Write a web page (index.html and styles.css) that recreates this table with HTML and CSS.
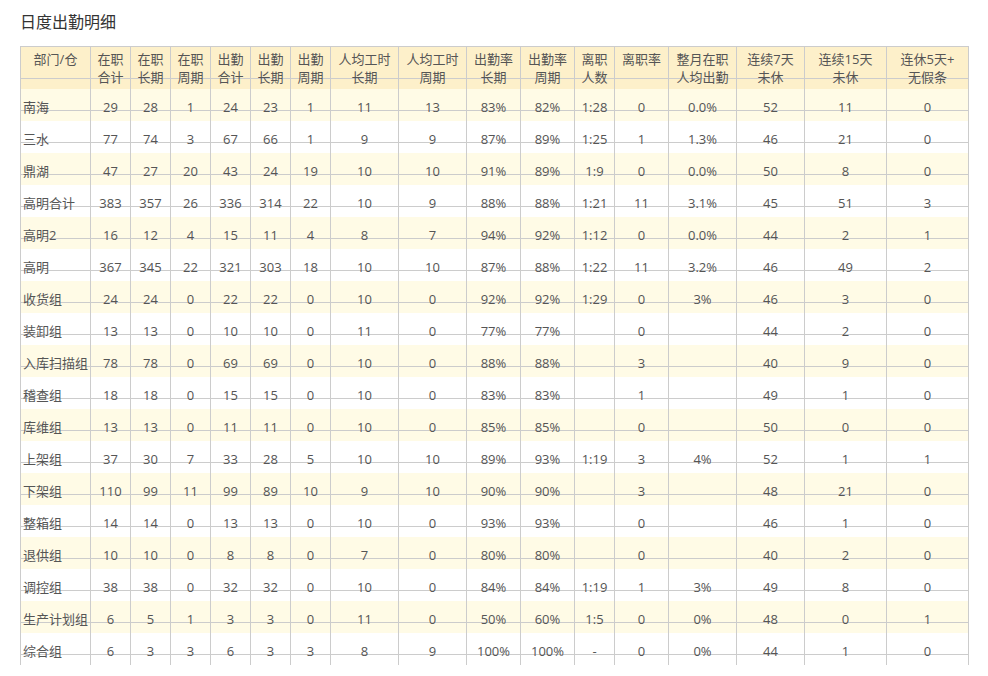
FILE: index.html
```html
<!DOCTYPE html>
<html lang="zh-CN">
<head>
<meta charset="utf-8">
<title>日度出勤明细</title>
<link rel="stylesheet" href="styles.css">
</head>
<body>
<div class="page">
  <h1 class="title">日度出勤明细</h1>
  <table class="grid">
    <colgroup>
      <col class="w70"><col class="w40"><col class="w40"><col class="w40"><col class="w40"><col class="w40"><col class="w40">
      <col class="w68"><col class="w68"><col class="w54"><col class="w54"><col class="w40"><col class="w54">
      <col class="w68"><col class="w68"><col class="w82"><col class="w83">
    </colgroup>
    <thead>
      <tr>
        <th>部门/仓</th><th>在职<br>合计</th><th>在职<br>长期</th><th>在职<br>周期</th><th>出勤<br>合计</th><th>出勤<br>长期</th><th>出勤<br>周期</th>
        <th>人均工时<br>长期</th><th>人均工时<br>周期</th><th>出勤率<br>长期</th><th>出勤率<br>周期</th><th>离职<br>人数</th><th>离职率</th>
        <th>整月在职<br>人均出勤</th><th>连续7天<br>未休</th><th>连续15天<br>未休</th><th>连休5天+<br>无假条</th>
      </tr>
    </thead>
    <tbody>
      <tr><td>南海</td><td>29</td><td>28</td><td>1</td><td>24</td><td>23</td><td>1</td><td>11</td><td>13</td><td>83%</td><td>82%</td><td>1:28</td><td>0</td><td>0.0%</td><td>52</td><td>11</td><td>0</td></tr>
      <tr><td>三水</td><td>77</td><td>74</td><td>3</td><td>67</td><td>66</td><td>1</td><td>9</td><td>9</td><td>87%</td><td>89%</td><td>1:25</td><td>1</td><td>1.3%</td><td>46</td><td>21</td><td>0</td></tr>
      <tr><td>鼎湖</td><td>47</td><td>27</td><td>20</td><td>43</td><td>24</td><td>19</td><td>10</td><td>10</td><td>91%</td><td>89%</td><td>1:9</td><td>0</td><td>0.0%</td><td>50</td><td>8</td><td>0</td></tr>
      <tr><td>高明合计</td><td>383</td><td>357</td><td>26</td><td>336</td><td>314</td><td>22</td><td>10</td><td>9</td><td>88%</td><td>88%</td><td>1:21</td><td>11</td><td>3.1%</td><td>45</td><td>51</td><td>3</td></tr>
      <tr><td>高明2</td><td>16</td><td>12</td><td>4</td><td>15</td><td>11</td><td>4</td><td>8</td><td>7</td><td>94%</td><td>92%</td><td>1:12</td><td>0</td><td>0.0%</td><td>44</td><td>2</td><td>1</td></tr>
      <tr><td>高明</td><td>367</td><td>345</td><td>22</td><td>321</td><td>303</td><td>18</td><td>10</td><td>10</td><td>87%</td><td>88%</td><td>1:22</td><td>11</td><td>3.2%</td><td>46</td><td>49</td><td>2</td></tr>
      <tr><td>收货组</td><td>24</td><td>24</td><td>0</td><td>22</td><td>22</td><td>0</td><td>10</td><td>0</td><td>92%</td><td>92%</td><td>1:29</td><td>0</td><td>3%</td><td>46</td><td>3</td><td>0</td></tr>
      <tr><td>装卸组</td><td>13</td><td>13</td><td>0</td><td>10</td><td>10</td><td>0</td><td>11</td><td>0</td><td>77%</td><td>77%</td><td></td><td>0</td><td></td><td>44</td><td>2</td><td>0</td></tr>
      <tr><td>入库扫描组</td><td>78</td><td>78</td><td>0</td><td>69</td><td>69</td><td>0</td><td>10</td><td>0</td><td>88%</td><td>88%</td><td></td><td>3</td><td></td><td>40</td><td>9</td><td>0</td></tr>
      <tr><td>稽查组</td><td>18</td><td>18</td><td>0</td><td>15</td><td>15</td><td>0</td><td>10</td><td>0</td><td>83%</td><td>83%</td><td></td><td>1</td><td></td><td>49</td><td>1</td><td>0</td></tr>
      <tr><td>库维组</td><td>13</td><td>13</td><td>0</td><td>11</td><td>11</td><td>0</td><td>10</td><td>0</td><td>85%</td><td>85%</td><td></td><td>0</td><td></td><td>50</td><td>0</td><td>0</td></tr>
      <tr><td>上架组</td><td>37</td><td>30</td><td>7</td><td>33</td><td>28</td><td>5</td><td>10</td><td>10</td><td>89%</td><td>93%</td><td>1:19</td><td>3</td><td>4%</td><td>52</td><td>1</td><td>1</td></tr>
      <tr><td>下架组</td><td>110</td><td>99</td><td>11</td><td>99</td><td>89</td><td>10</td><td>9</td><td>10</td><td>90%</td><td>90%</td><td></td><td>3</td><td></td><td>48</td><td>21</td><td>0</td></tr>
      <tr><td>整箱组</td><td>14</td><td>14</td><td>0</td><td>13</td><td>13</td><td>0</td><td>10</td><td>0</td><td>93%</td><td>93%</td><td></td><td>0</td><td></td><td>46</td><td>1</td><td>0</td></tr>
      <tr><td>退供组</td><td>10</td><td>10</td><td>0</td><td>8</td><td>8</td><td>0</td><td>7</td><td>0</td><td>80%</td><td>80%</td><td></td><td>0</td><td></td><td>40</td><td>2</td><td>0</td></tr>
      <tr><td>调控组</td><td>38</td><td>38</td><td>0</td><td>32</td><td>32</td><td>0</td><td>10</td><td>0</td><td>84%</td><td>84%</td><td>1:19</td><td>1</td><td>3%</td><td>49</td><td>8</td><td>0</td></tr>
      <tr><td>生产计划组</td><td>6</td><td>5</td><td>1</td><td>3</td><td>3</td><td>0</td><td>11</td><td>0</td><td>50%</td><td>60%</td><td>1:5</td><td>0</td><td>0%</td><td>48</td><td>0</td><td>1</td></tr>
      <tr><td>综合组</td><td>6</td><td>3</td><td>3</td><td>6</td><td>3</td><td>3</td><td>8</td><td>9</td><td>100%</td><td>100%</td><td>-</td><td>0</td><td>0%</td><td>44</td><td>1</td><td>0</td></tr>
    </tbody>
  </table>
</div>
</body>
</html>
```
FILE: styles.css
```css
html, body {
  margin: 0;
  padding: 0;
  background: #fff;
}

.page {
  padding: 10px 20px 0;
  font-family: "Open Sans", "Noto Sans CJK SC", sans-serif;
  color: #555;
}

.title {
  margin: 0 0 12px;
  font-size: 16px;
  line-height: 24px;
  font-weight: normal;
  color: #333;
}

.grid {
  border-collapse: separate;
  border-spacing: 0;
  table-layout: fixed;
  width: 949px;
  font-size: 13px;
}

.w40 { width: 40px; }
.w54 { width: 54px; }
.w68 { width: 68px; }
.w70 { width: 70px; }
.w82 { width: 82px; }
.w83 { width: 83px; }

.grid th,
.grid td {
  border-left: 1px solid #ccc;
  text-align: center;
  vertical-align: top;
  white-space: nowrap;
  overflow: hidden;
  font-weight: normal;
  line-height: 18px;
  background-repeat: no-repeat;
  background-image: linear-gradient(#ccc, #ccc);
}

.grid th:last-child,
.grid td:last-child {
  border-right: 1px solid #ccc;
}

.grid th {
  border-top: 1px solid #ccc;
  height: 43px;
  padding: 3px 0 0;
  box-sizing: border-box;
  background-color: #fdf0ca;
  background-position: 0 31px;
  background-size: 100% 1px;
}

.grid td {
  height: 32px;
  box-sizing: border-box;
  padding: 9px 0 5px;
  background-position: 0 21px;
  background-size: 100% 1px;
}

.grid td:first-child {
  text-align: left;
  padding-left: 2px;
}

.grid tbody tr:nth-child(odd) {
  background-color: #fffbe6;
}

.grid tbody tr:nth-child(even) {
  background-color: #fff;
}
```
